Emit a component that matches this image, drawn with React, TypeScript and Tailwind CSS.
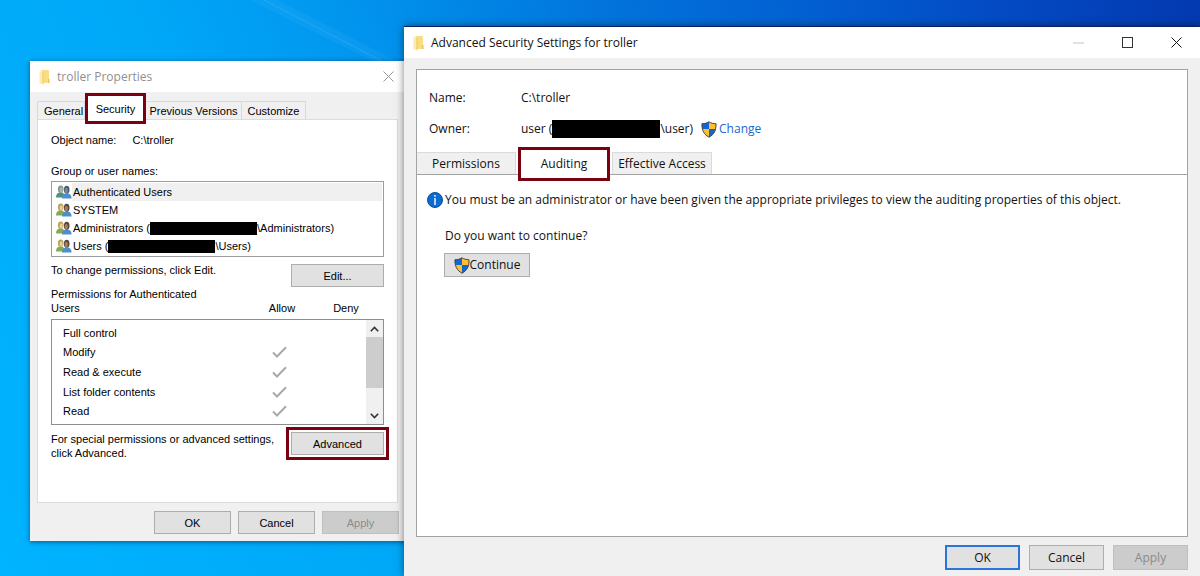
import clsx from 'clsx'
import type { ReactNode } from 'react'

const groups = [
  { name: 'Authenticated Users', selected: true },
  { name: 'SYSTEM' },
  { name: 'Administrators (', tail: '\\Administrators)' },
  { name: 'Users (', tail: '\\Users)' },
]

const permissions = [
  { name: 'Full control', allow: false },
  { name: 'Modify', allow: true },
  { name: 'Read & execute', allow: true },
  { name: 'List folder contents', allow: true },
  { name: 'Read', allow: true },
]

function FolderIcon() {
  return (
    <svg width="12" height="16" viewBox="0 0 12 16" className="shrink-0">
      <path d="M2.500 1H9l1 1v12H3z" fill="#f9dc83" />
      <path d="M.5 1.500L3.500 3v12.500L.5 14z" fill="#fcebb4" />
      <path d="M3.500 3h1v11.500l-1 1z" fill="#f0c95f" />
      <path d="M9 10h1.500v4H9z" fill="#ecc258" />
    </svg>
  )
}

function ShieldIcon() {
  return (
    <svg width="16" height="17" viewBox="0 0 16 17" className="shrink-0">
      <clipPath id="shield">
        <path d="M8 .5C6 2 3.500 2.500 .8 2.500 .5 9 2.500 13.500 8 16.500 13.500 13.500 15.500 9 15.200 2.500 12.500 2.500 10 2 8 .5z" />
      </clipPath>
      <g clipPath="url(#shield)">
        <path d="M0 0h8v8H0z" fill="#1565d0" />
        <path d="M8 0h8v8H8z" fill="#fcc032" />
        <path d="M0 8h8v9H0z" fill="#fcc032" />
        <path d="M8 8h8v9H8z" fill="#1565d0" />
      </g>
      <path
        d="M8 .8C6 2.200 3.500 2.700 1 2.700 .8 9 2.700 13.300 8 16.200 13.300 13.300 15.200 9 15 2.700 12.500 2.700 10 2.200 8 .8z"
        fill="none" stroke="#4a4a48" strokeWidth="1"
      />
    </svg>
  )
}

function InfoIcon() {
  return (
    <svg width="16" height="16" viewBox="0 0 16 16" className="shrink-0">
      <circle cx="8" cy="8" r="7.500" fill="#0a6cce" stroke="#0a4f9c" strokeWidth="1" />
      <path d="M7.300 3h1.400v1.700H7.300zM7.300 6h1.400v7H7.300z" fill="#fff" />
    </svg>
  )
}

function GroupIcon({ muted }: { muted?: boolean }) {
  return (
    <svg width="16" height="14" viewBox="0 0 16 14" className="shrink-0">
      <path d="M0 12.500C0 9 1.500 7.500 4.500 7.500S9 9 9 12.500z" fill={muted ? '#4d9080' : '#84ab4c'} />
      <ellipse cx="4.700" cy="4.300" rx="2.800" ry="3.700" fill={muted ? '#7a9992' : '#b7a25c'} />
      <ellipse cx="5.200" cy="4.800" rx="1.600" ry="2.600" fill={muted ? '#a9b8b4' : '#e8cf9f'} />
      <path d="M6 13.500C6 10 7.500 8.500 10.800 8.500S15.500 10 15.500 13.500z" fill="#4d8fcb" />
      <ellipse cx="10.700" cy="4.800" rx="2.800" ry="4" fill={muted ? '#4a5d70' : '#54483f'} />
      <ellipse cx="10.300" cy="5.600" rx="1.600" ry="2.800" fill={muted ? '#7a8794' : '#a57f63'} />
    </svg>
  )
}

function CloseIcon() {
  return (
    <svg width="11" height="11" viewBox="0 0 11 11" fill="none" stroke="currentColor">
      <path d="M.5 .5l10 10M10.500 .5l-10 10" />
    </svg>
  )
}

function Chevron({ down }: { down?: boolean }) {
  return (
    <svg width="9" height="6" viewBox="0 0 9 6" fill="none" stroke="#333" strokeWidth="1.600">
      <path d={down ? 'M.8 .8l3.700 3.700L8.200 .8' : 'M.8 5.200l3.700-3.700 3.700 3.700'} />
    </svg>
  )
}

interface ButtonProps {
  children: ReactNode
  className?: string
  disabled?: boolean
  primary?: boolean
}

function Button({ children, className, disabled, primary }: ButtonProps) {
  return (
    <button
      type="button"
      disabled={disabled}
      className={clsx(
        'flex items-center justify-center',
        primary ? 'border-2 border-[#2a76d8]' : 'border',
        disabled ? 'border-[#bfbfbf] bg-[#cccccc] text-[#8b8b8b]' : 'bg-[#e1e1e1]',
        !disabled && !primary && 'border-[#adadad]',
        className,
      )}
    >
      {children}
    </button>
  )
}

function Redacted({ className }: { className: string }) {
  return <span className={clsx('shrink-0 bg-black', className)} />
}

function PropertiesWindow() {
  return (
    <section className="absolute top-[61px] left-[30px] w-[376px] bg-[#f0f0f0] font-['Liberation_Sans',Arial,sans-serif] text-[11px] leading-[14px] text-black shadow-[0_1px_5px_rgba(0,30,80,0.6)]">
      <header className="flex h-[31px] items-center bg-white pr-3 pl-[9px] text-[#8f8f8f]">
        <FolderIcon />
        <h1 className="ml-[6px] flex-1 font-['Open_Sans','Segoe_UI',sans-serif] text-[12px]">troller Properties</h1>
        <button type="button" aria-label="Close" className="text-[#999]"><CloseIcon /></button>
      </header>

      <div className="px-[7px] pt-[3px]">
        <div role="tablist" className="flex h-[24px] items-end">
          <button role="tab" className="h-[18px] w-[48px] border border-b-0 border-[#d9d9d9] pl-[6px] text-left">General</button>
          <button role="tab" aria-selected="true" className="z-10 -mb-[5px] h-[31px] w-[61px] border-3 border-[#7b0010] bg-white">Security</button>
          <button role="tab" className="h-[18px] w-[96px] border border-b-0 border-l-0 border-[#d9d9d9] whitespace-nowrap">Previous Versions</button>
          <button role="tab" className="h-[18px] w-[64px] border border-b-0 border-l-0 border-[#d9d9d9]">Customize</button>
        </div>

        <div className="mr-px h-[384px] border border-[#dcdcdc] bg-white px-[13px]">
          <dl className="flex gap-4 pt-[13px]">
            <dt>Object name:</dt>
            <dd>C:\troller</dd>
          </dl>

          <h2 className="mt-[17px]">Group or user names:</h2>
          <ul className="mt-[3px] h-[76px] border border-[#9a9ca0] px-px pt-px">
            {groups.map((g) => (
              <li key={g.name} className="flex h-[18px] items-center pl-[3px]">
                <GroupIcon muted={g.selected} />
                <span className={clsx('flex h-[18px] flex-1 items-center pl-px', g.selected && 'bg-[#f0f0f0]')}>
                  {g.name}
                  {g.tail && <Redacted className="h-[13px] w-[107px]" />}
                  {g.tail}
                </span>
              </li>
            ))}
          </ul>

          <div className="mt-[6px] flex justify-between">
            <p>To change permissions, click Edit.</p>
            <Button className="mt-px h-[23px] w-[93px]">Edit...</Button>
          </div>

          <div className="flex items-end">
            <h2 className="w-[160px]">Permissions for Authenticated Users</h2>
            <span className="w-[142px] text-center">Allow</span>
            <span className="-ml-5 w-[26px] text-center">Deny</span>
          </div>
          <div className="mt-[4px] flex h-[106px] items-start border border-[#8c8e92]">
            <table className="mt-[3px] h-[98px] flex-1">
              <tbody>
                {permissions.map((p) => (
                  <tr key={p.name}>
                    <td className="p-0 pl-[11px]">{p.name}</td>
                    <td className="w-[94px] p-0">
                      {p.allow && (
                        <svg width="15" height="12" viewBox="0 0 15 12" fill="none" stroke="#a9a9a9" strokeWidth="2" role="img" aria-label="Allowed">
                          <path d="M1 6.500l4 4L14 1.200" />
                        </svg>
                      )}
                    </td>
                  </tr>
                ))}
              </tbody>
            </table>
            <div className="flex w-[17px] flex-col self-stretch bg-[#f0f0f0]">
              <button type="button" aria-label="Scroll up" className="flex h-[17px] items-center justify-center"><Chevron /></button>
              <div className="h-[51px] bg-[#cdcdcd]" />
              <div className="flex-1" />
              <button type="button" aria-label="Scroll down" className="flex h-[17px] items-center justify-center"><Chevron down /></button>
            </div>
          </div>

          <div className="mt-[2px] flex justify-between">
            <p className="mt-[5px]">For special permissions or advanced settings,<br />click Advanced.</p>
            <div className="-mr-[5px] border-3 border-[#7b0010] p-[2px]">
              <Button className="h-[23px] w-[93px]">Advanced</Button>
            </div>
          </div>
        </div>
      </div>

      <footer className="flex justify-end gap-[7px] p-[7px] pt-2">
        <Button className="h-[23px] w-[77px]">OK</Button>
        <Button className="h-[23px] w-[77px]">Cancel</Button>
        <Button disabled className="h-[23px] w-[77px]">Apply</Button>
      </footer>
    </section>
  )
}

function AdvancedWindow() {
  return (
    <section className="absolute top-[26px] right-0 bottom-0 left-[404px] flex flex-col border-t border-[#0b1f66] bg-[#f0f0f0] font-['Open_Sans','Segoe_UI',sans-serif] text-[12px] leading-4 text-[#111] shadow-[0_0_8px_rgba(0,0,0,0.5)]">
      <header className="flex h-[31px] items-center bg-white pr-[18px] pl-[9px]">
        <FolderIcon />
        <h1 className="ml-[6px] flex-1">Advanced Security Settings for troller</h1>
        <div className="flex items-center gap-[38px]">
          <button type="button" aria-label="Minimize" className="h-[2px] w-[11px] bg-[#e2e2e2]" />
          <button type="button" aria-label="Maximize" className="size-[11px] border border-[#333]" />
          <button type="button" aria-label="Close"><CloseIcon /></button>
        </div>
      </header>

      <div className="mx-3 mt-[11px] flex flex-1 flex-col border border-[#a3a3a3] bg-white">
        <dl className="grid grid-cols-[92px_1fr] gap-y-[15px] pt-[20px] pl-3">
          <dt>Name:</dt>
          <dd>C:\troller</dd>
          <dt>Owner:</dt>
          <dd className="flex h-4 items-center">
            user (<Redacted className="h-[18px] w-[108px]" />\user)
            <a href="#change" className="ml-2 flex items-center gap-[2px] text-[#1b66d0]">
              <ShieldIcon />
              Change
            </a>
          </dd>
        </dl>

        <div role="tablist" className="mt-[9px] flex h-[29px] items-end border-b border-[#a3a3a3]">
          <button role="tab" className="h-[22px] w-[99px] border border-b-0 border-l-0 border-[#dadada] bg-[#f0f0f0]">Permissions</button>
          <button role="tab" aria-selected="true" className="z-10 mx-[2px] -mb-[7px] h-[34px] w-[92px] border-3 border-[#7b0010] bg-white">Auditing</button>
          <button role="tab" className="h-[22px] w-[100px] border border-b-0 border-[#dadada] bg-[#f0f0f0] whitespace-nowrap">Effective Access</button>
        </div>

        <div className="pt-[17px] pl-[10px]">
          <p className="flex items-center gap-[2px]">
            <InfoIcon />
            You must be an administrator or have been given the appropriate privileges to view the auditing properties of this object.
          </p>
          <p className="mt-[20px] ml-[18px]">Do you want to continue?</p>
          <Button className="mt-[9px] ml-[17px] h-[24px] w-[86px]">
            <ShieldIcon />
            Continue
          </Button>
        </div>
      </div>

      <footer className="flex justify-end gap-[9px] px-3 pt-[8px] pb-[6px]">
        <Button primary className="h-[25px] w-[75px]">OK</Button>
        <Button className="h-[25px] w-[75px]">Cancel</Button>
        <Button disabled className="h-[25px] w-[75px]">Apply</Button>
      </footer>
    </section>
  )
}

export default function App() {
  return (
    <main className="relative h-screen overflow-hidden bg-[linear-gradient(65deg,#00b4ff_0%,#00a8f8_27%,#0199f0_39%,#018feb_45%,#0274dc_59%,#0260d2_73%,#034cc5_85%,#0339b0_100%)]">
      {/* Light ray on the wallpaper */}
      <svg width="180" height="90" viewBox="0 0 180 90" className="absolute top-0 left-[250px]">
        <path d="M0 0h28l152 78v12z" fill="#4fc0ff" opacity="0.12" />
        <path d="M14 0l166 86" stroke="#6fcbff" opacity="0.25" />
      </svg>
      <PropertiesWindow />
      <AdvancedWindow />
    </main>
  )
}
